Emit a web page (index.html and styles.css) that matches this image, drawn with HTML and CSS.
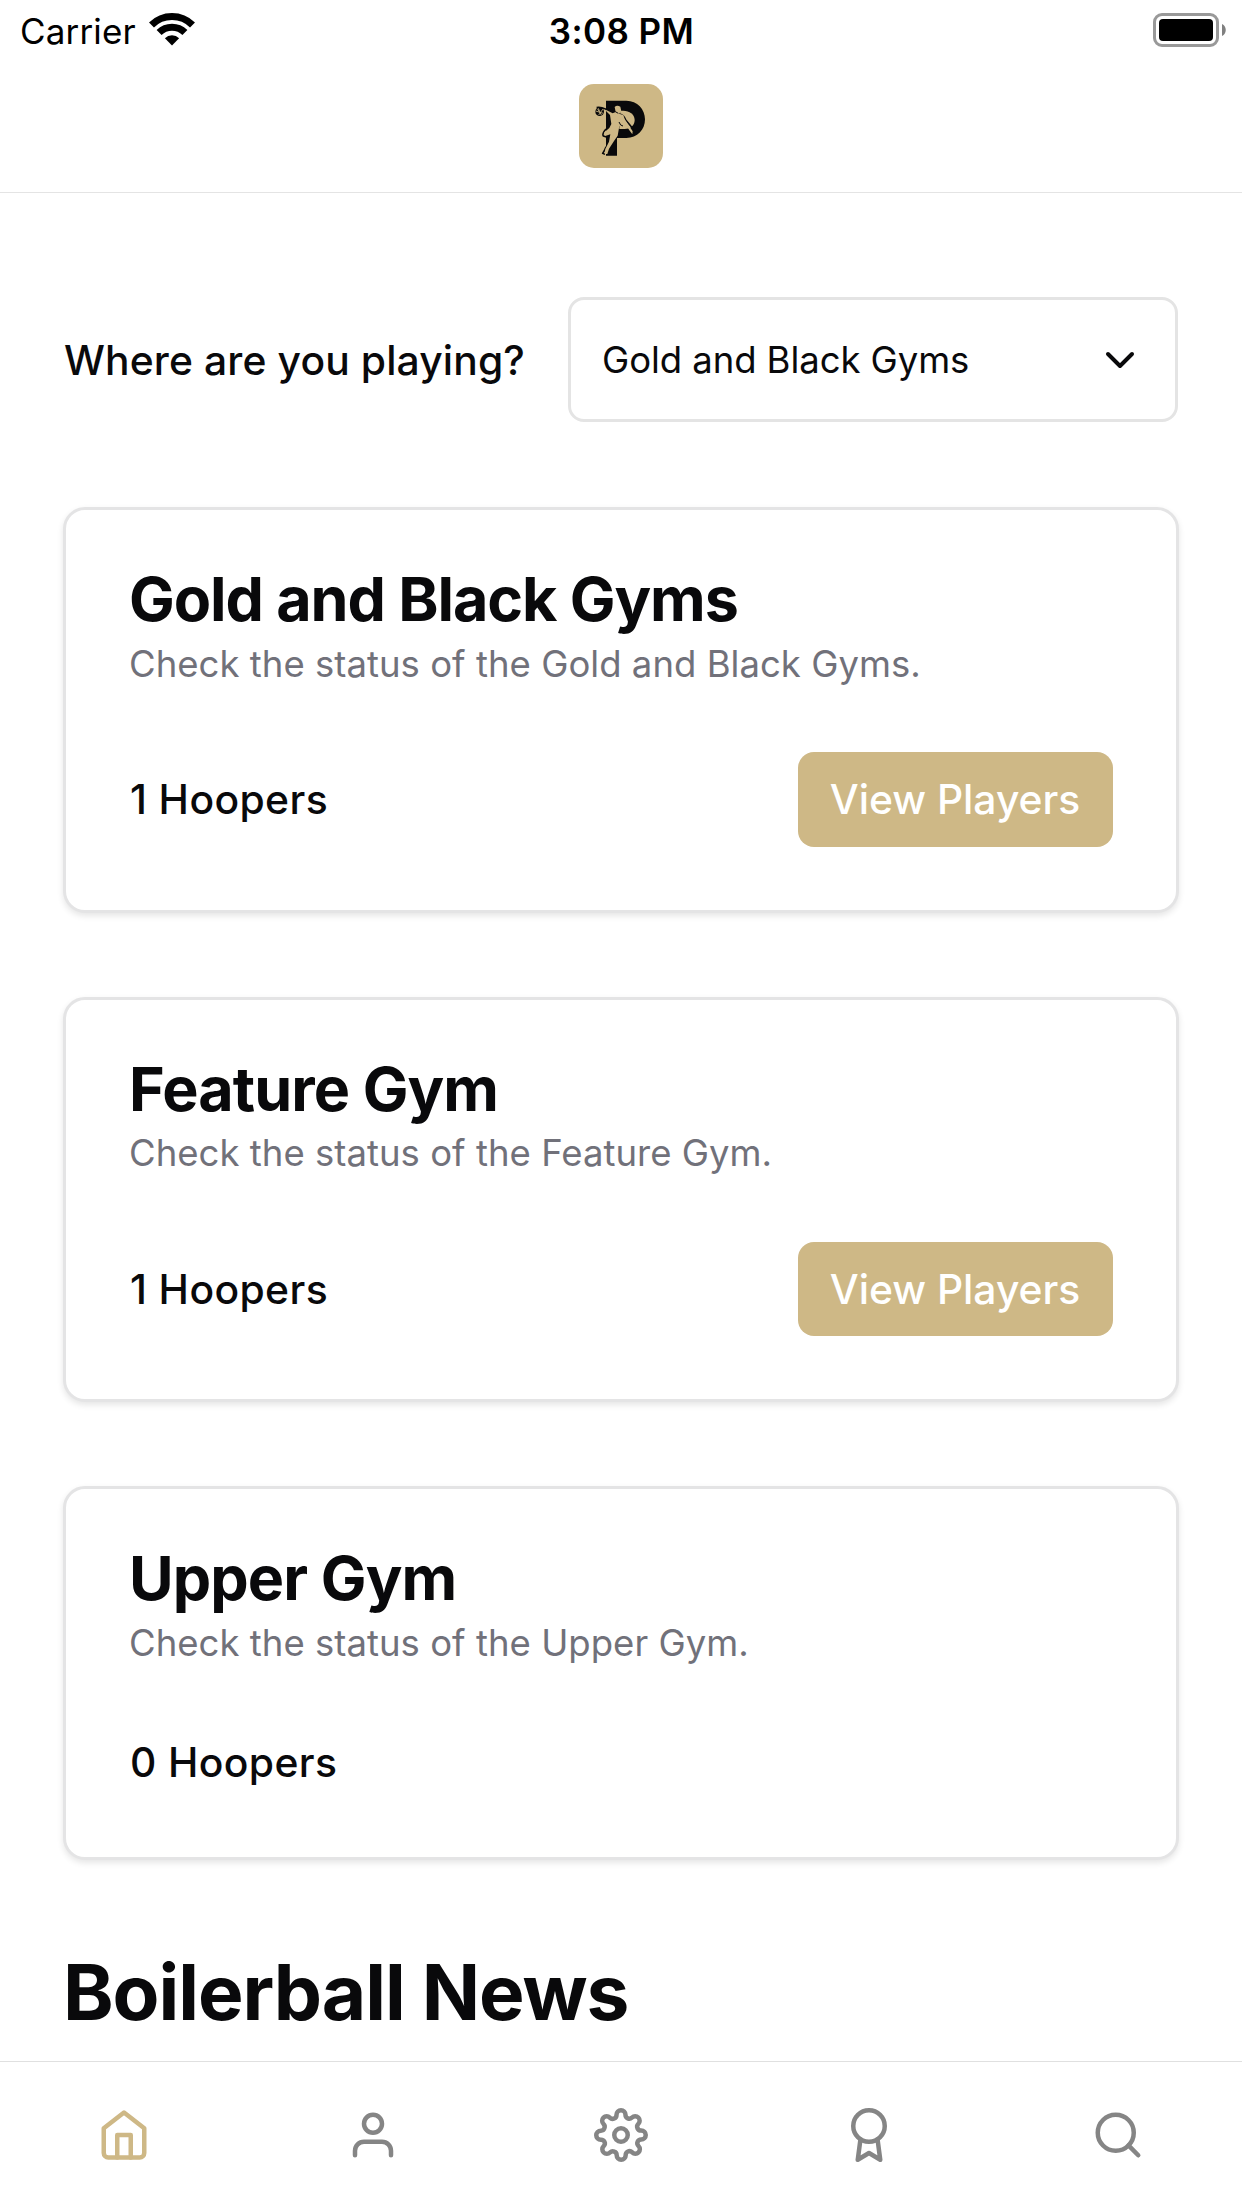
FILE: index.html
```html
<!DOCTYPE html>
<html lang="en">
<head>
<meta charset="utf-8">
<title>Boilerball</title>
<link rel="stylesheet" href="styles.css">
</head>
<body>
<div class="screen">
  <div class="status">
    <div class="status-left">
      <span class="carrier">Carrier</span>
      <svg class="wifi" viewBox="0 0 46 34" fill="none" stroke="#000" stroke-width="7">
        <path d="M2.5 12.9A29 29 0 0 1 43.5 12.9"/>
        <path d="M10.1 20.5A18.2 18.2 0 0 1 35.9 20.5"/>
        <path d="M23 33.4L15.9 26.3A10 10 0 0 1 30.1 26.3Z" fill="#000" stroke="none"/>
      </svg>
    </div>
    <span class="time">3:08 PM</span>
    <div class="status-right">
      <svg class="battery" viewBox="0 0 73 34">
        <rect x="1.5" y="1.5" width="63" height="31" rx="7.5" fill="none" stroke="#999" stroke-width="3"/>
        <rect x="6" y="6" width="54" height="22" rx="4"/>
        <path d="M69 11C74 13 74 21 69 23Z" fill="#808080"/>
      </svg>
    </div>
  </div>

  <header class="header">
    <svg class="logo" viewBox="237 252 252 252">
      <rect class="gold" x="237" y="252" width="252" height="252" rx="45"/>
      <path class="ink" d="M318 302H379C412 302 435 327 435 358C435 390 412 414 379 414H351V467H318Z"/>
      <path class="gold" d="M362 333C385 330 403 341 404 360C404 377 391 387 374 387H358V345Z"/>
      <circle class="ink" cx="299" cy="335" r="13"/>
      <path class="seam" d="M287 333L310 340M292 326L305 346M296 345L309 327M294 322L299 335"/>
      <path class="outline" d="M290 323Q300 320 318 328L342 335M318 387Q305 402 310 408L322 412M326 433Q317 440 313 452L308 460L315 463"/>
      <path class="outline" d="M360 342Q372 346 377 360L399 386L400 402"/>
      <path class="gold" d="M310 328L318 333L330 345L334 372L328 384L313 397Q312 405 318 407L331 403L327 425L316 447L314 462L322 462L327 446L344 420L353 407L358 378L369 375L362 356Q371 360 375 370L388 391L397 403L398 394L385 374L374 357L370 345L357 341L364 334L361 320Q351 314 344 321L347 336L338 340L320 331Z"/>
      <path class="line" d="M346 335L355 340M357 366L362 375L369 378"/>
    </svg>
  </header>

  <main class="main">
    <div class="picker">
      <label class="label">Where are you playing?</label>
      <div class="select">
        <span class="value">Gold and Black Gyms</span>
        <svg class="chevron" viewBox="0 0 24 24"><path d="M6 9l6 6 6-6"/></svg>
      </div>
    </div>

    <section class="card">
      <h2 class="title wide">Gold and Black Gyms</h2>
      <p class="sub">Check the status of the Gold and Black Gyms.</p>
      <div class="row"><span class="count">1 Hoopers</span><button class="button">View Players</button></div>
    </section>
    <section class="card">
      <h2 class="title">Feature Gym</h2>
      <p class="sub">Check the status of the Feature Gym.</p>
      <div class="row"><span class="count">1 Hoopers</span><button class="button">View Players</button></div>
    </section>
    <section class="card">
      <h2 class="title">Upper Gym</h2>
      <p class="sub">Check the status of the Upper Gym.</p>
      <div class="row"><span class="count">0 Hoopers</span></div>
    </section>

    <h1 class="news">Boilerball News</h1>
  </main>

  <nav class="tabs">
    <a class="tab active"><svg class="icon" viewBox="0 0 24 24"><path d="M3 9l9-7 9 7v11a2 2 0 0 1-2 2H5a2 2 0 0 1-2-2z"/><path d="M9 22V12h6v10"/></svg></a>
    <a class="tab"><svg class="icon" viewBox="0 0 24 24"><path d="M20 21v-2a4 4 0 0 0-4-4H8a4 4 0 0 0-4 4v2"/><circle cx="12" cy="7" r="4"/></svg></a>
    <a class="tab"><svg class="icon" viewBox="0 0 24 24"><circle cx="12" cy="12" r="3"/><path d="M19.4 15a1.65 1.65 0 0 0 .33 1.82l.06.06a2 2 0 0 1 0 2.83 2 2 0 0 1-2.83 0l-.06-.06a1.65 1.65 0 0 0-1.82-.33 1.65 1.65 0 0 0-1 1.51V21a2 2 0 0 1-2 2 2 2 0 0 1-2-2v-.09A1.65 1.65 0 0 0 9 19.4a1.65 1.65 0 0 0-1.82.33l-.06.06a2 2 0 0 1-2.83 0 2 2 0 0 1 0-2.83l.06-.06a1.65 1.65 0 0 0 .33-1.82 1.65 1.65 0 0 0-1.51-1H3a2 2 0 0 1-2-2 2 2 0 0 1 2-2h.09A1.65 1.65 0 0 0 4.6 9a1.65 1.65 0 0 0-.33-1.82l-.06-.06a2 2 0 0 1 0-2.83 2 2 0 0 1 2.83 0l.06.06a1.65 1.65 0 0 0 1.82.33H9a1.65 1.65 0 0 0 1-1.51V3a2 2 0 0 1 2-2 2 2 0 0 1 2 2v.09a1.65 1.65 0 0 0 1 1.51 1.65 1.65 0 0 0 1.82-.33l.06-.06a2 2 0 0 1 2.83 0 2 2 0 0 1 0 2.83l-.06.06a1.65 1.65 0 0 0-.33 1.82V9a1.65 1.65 0 0 0 1.51 1H21a2 2 0 0 1 2 2 2 2 0 0 1-2 2h-.09a1.65 1.65 0 0 0-1.51 1z"/></svg></a>
    <a class="tab"><svg class="icon" viewBox="0 0 24 24"><circle cx="12" cy="8" r="7"/><path d="M8.21 13.89L7 23l5-3 5 3-1.21-9.12"/></svg></a>
    <a class="tab"><svg class="icon" viewBox="0 0 24 24"><circle cx="11" cy="11" r="8"/><path d="M21 21l-4.35-4.35"/></svg></a>
  </nav>
</div>
</body>
</html>
```
FILE: styles.css
```css
* { box-sizing: border-box; }
body {
  margin: 0;
  background: #fff;
  color: #09090b;
  font-family: Inter, "Liberation Sans", sans-serif;
}
h1, h2, p { margin: 0; }
svg { display: block; flex: none; }

.screen {
  display: flex;
  flex-direction: column;
  height: 2208px;
  overflow: hidden;
}

/* Status bar */
.status {
  display: grid;
  grid-template-columns: 1fr auto 1fr;
  align-items: center;
  height: 60px;
  padding: 2px 16px 0 20px;
  color: #000;
  font-size: 35px;
}
.status-left { display: flex; align-items: center; gap: 13px; }
.status-right { display: flex; justify-content: flex-end; }
.carrier { letter-spacing: 0.15px; }
.wifi { width: 46px; height: 34px; margin-bottom: 4px; }
.time { font-weight: 600; letter-spacing: 0.4px; margin-right: 3px; }
.battery { width: 73px; height: 34px; margin-bottom: 2px; }

/* App header */
.header {
  display: flex;
  justify-content: center;
  height: 133px;
  padding-top: 24px;
  border-bottom: 1px solid #e4e4e4;
}
.logo { width: 84px; height: 84px; }
.gold { fill: #ceb886; }
.ink { fill: #09090b; }
.seam { fill: none; stroke: #ceb886; stroke-width: 2.5; }
.outline { fill: none; stroke: #09090b; stroke-width: 5; stroke-linejoin: round; }
.line { fill: none; stroke: #09090b; stroke-width: 3; }

/* Content */
.main {
  flex: 1;
  min-height: 0;
  display: flex;
  flex-direction: column;
  gap: 84px;
  padding: 104px 63px 0;
}
.picker {
  display: flex;
  align-items: center;
  justify-content: space-between;
  height: 125px;
  margin-bottom: 1px;
}
.label {
  padding-left: 1px;
  font-size: 40.8px;
  font-weight: 500;
  letter-spacing: 0.13px;
  white-space: nowrap;
}
.select {
  display: flex;
  align-items: center;
  justify-content: space-between;
  width: 610px;
  height: 125px;
  margin-right: 1px;
  padding: 0 31px;
  border: 3px solid #e4e4e4;
  border-radius: 16px;
}
.value { font-size: 36.5px; letter-spacing: -0.07px; }
.chevron {
  width: 48px;
  height: 48px;
  fill: none;
  stroke: #09090b;
  stroke-width: 2;
  stroke-linecap: round;
  stroke-linejoin: round;
}

.card {
  flex: none;
  padding: 63px;
  border: 3px solid #e4e4e5;
  border-radius: 22px;
  background: #fff;
  box-shadow: 0 3px 6px rgba(0, 0, 0, 0.1);
}
.title {
  font-size: 61px;
  font-weight: 700;
  line-height: 52px;
  letter-spacing: -0.9px;
}
.title.wide { letter-spacing: -1.08px; }
.sub {
  margin: 11.5px 0 61.5px;
  color: #71717a;
  font-size: 36.5px;
  line-height: 54px;
  letter-spacing: 0.03px;
}
.row {
  display: flex;
  align-items: center;
  justify-content: space-between;
}
.count {
  padding-left: 1px;
  font-size: 40.8px;
  font-weight: 500;
  line-height: 62.5px;
  letter-spacing: 0.4px;
}
.button {
  width: 315px;
  height: 94.5px;
  padding: 0 1px 0 0;
  border: 0;
  border-radius: 16px;
  background: #ceb886;
  color: #fff;
  font: 500 40.8px Inter, "Liberation Sans", sans-serif;
}
.news {
  font-size: 76.6px;
  font-weight: 700;
  line-height: 96px;
  letter-spacing: -1.06px;
}

/* Tab bar */
.tabs {
  display: flex;
  height: 147px;
  border-top: 1px solid #e0e0e0;
  background: #fff;
  color: #858585;
}
.tab {
  flex: 1;
  display: flex;
  align-items: center;
  justify-content: center;
}
.tab.active { color: #ceb886; }
.icon {
  width: 54px;
  height: 54px;
  fill: none;
  stroke: currentColor;
  stroke-width: 2;
  stroke-linecap: round;
  stroke-linejoin: round;
}
```
